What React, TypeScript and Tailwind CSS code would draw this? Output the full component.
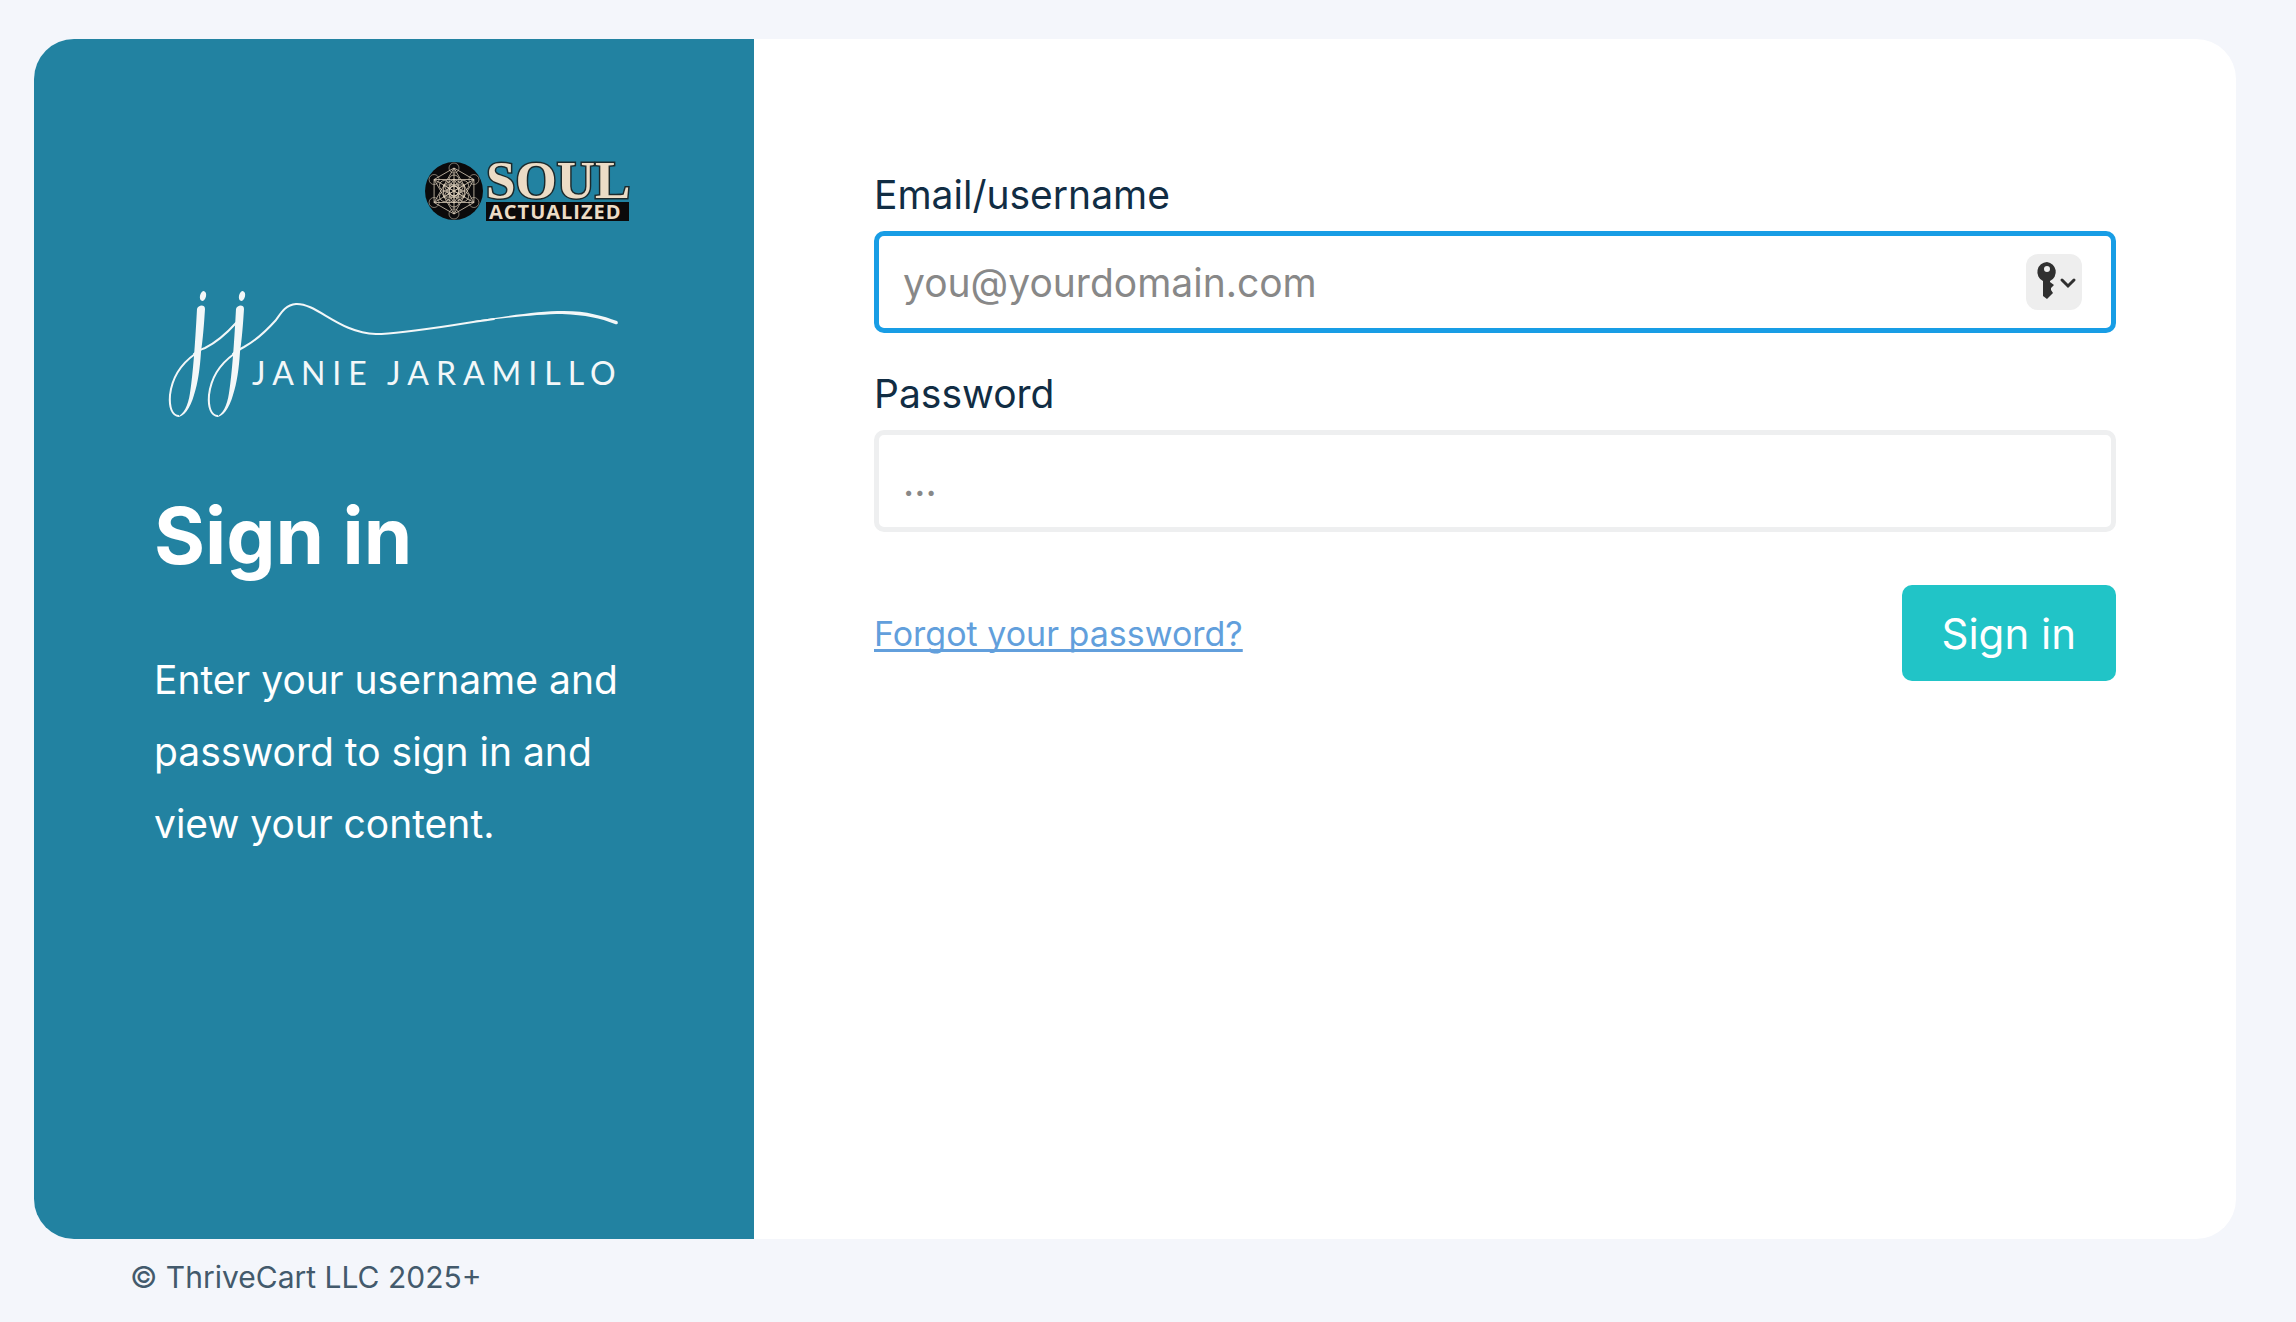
import { useState } from "react";
import type { InputHTMLAttributes, ReactNode } from "react";

const spokes = [0, 60, 120, 180, 240, 300].map((deg) => {
  const a = ((deg - 90) * Math.PI) / 180;
  return { x: Math.cos(a), y: Math.sin(a) };
});

function SoulLogo() {
  return (
    <svg width="224" height="80" viewBox="0 0 224 80" role="img" aria-label="Soul Actualized" className="self-end">
      <circle cx="44" cy="41" r="29" fill="#0b0a0b" />
      <g transform="translate(44 41)" fill="none" stroke="#d9cbb8" strokeWidth="0.8">
        {spokes.map((p, i) => (
          <g key={i}>
            <circle cx={p.x * 23} cy={p.y * 23} r="5" strokeOpacity="0.7" />
            <circle cx={p.x * 11} cy={p.y * 11} r="5" />
            {spokes.slice(i + 1).map((q, j) => (
              <g key={j}>
                <line x1={p.x * 23} y1={p.y * 23} x2={q.x * 23} y2={q.y * 23} />
                <line x1={p.x * 12} y1={p.y * 12} x2={q.x * 12} y2={q.y * 12} />
              </g>
            ))}
          </g>
        ))}
        <circle r="5" strokeWidth="1.5" />
      </g>
      <rect x="76" y="52" width="143" height="19" fill="#0b0a0b" />
      <text fill="#ecdcc6" className="font-bold">
        <tspan x="76" y="48" fontSize="53" stroke="#1c2a2c" strokeWidth="3" paintOrder="stroke" className="font-['Liberation_Serif',serif]">
          SOUL
        </tspan>
        <tspan x="79" y="69" fontSize="20" letterSpacing="1" className="font-['Open_Sans',sans-serif]">
          ACTUALIZED
        </tspan>
      </text>
    </svg>
  );
}

function JanieLogo() {
  return (
    <svg width="480" height="150" viewBox="0 0 480 150" role="img" aria-label="Janie Jaramillo" fill="#f3f7f8">
      <g id="letter-j">
        <ellipse cx="49" cy="16" rx="3" ry="5" transform="rotate(14 49 16)" />
        <path d="M43 29C44 25 51 24 51 29C50 45 49 58 47 72C46 88 44 103 40 115C36 129 30 137 23 137C30 134 34 126 36 113C39 94 41 66 43 29Z" />
        <path d="M25 136C18 136 15 127 16 115C18 98 27 84 41 74" fill="none" stroke="#f3f7f8" strokeWidth="2" />
      </g>
      <use href="#letter-j" x="39" />
      <g fill="none" stroke="#f3f7f8" strokeWidth="2" strokeLinecap="round">
        <path d="M40 74C44 70 46 70 51 68C63 62 73 53 82 43" />
        <path d="M79 74C82 71 86 69 90 67C103 60 113 50 122 40C127 33 131 25 142 24C163 23 185 53 222 54C250 54 290 46 340 39" />
      </g>
      <path d="M320 41C360 35 385 31 410 31C433 31 449 36 463 41C465 43 463 45 461 44C446 38 432 35 408 34C385 34 350 38 320 42Z" />
      <g fontSize="32" letterSpacing="7" className="font-['Lato',sans-serif]">
        <text x="98" y="105">JANIE</text>
        <text x="233" y="105">JARAMILLO</text>
      </g>
    </svg>
  );
}

function KeyIcon() {
  return (
    <svg width="56" height="56" viewBox="-1 0 56 56" aria-hidden="true">
      <path
        fillRule="evenodd"
        fill="#303030"
        d="M20 8A10 10 0 0 1 23 27V28L27 31L24 34V36L26 39L24 41L20 45L16 42V27A10 10 0 0 1 20 8ZM20 12A3 3 0 1 0 20 18A3 3 0 1 0 20 12Z"
      />
      <path d="M35 26L41 32L47 26" fill="none" stroke="#303030" strokeWidth="3" strokeLinecap="round" />
    </svg>
  );
}

interface FieldProps extends InputHTMLAttributes<HTMLInputElement> {
  id: string;
  label: string;
  active?: boolean;
  children?: ReactNode;
}

function Field({ id, label, active, children, ...rest }: FieldProps) {
  return (
    <div>
      <label htmlFor={id} className="block text-[39px] leading-[48px] text-[#112d44]">
        {label}
      </label>
      <div className="relative mt-3">
        <input
          id={id}
          {...rest}
          className={`block h-[102px] w-full rounded-[10px] border-[5px] bg-white px-6 text-[39px] text-[#112d44] outline-none placeholder:text-[#888888] ${active ? "border-[#189de5]" : "border-[#eeeff0]"}`}
        />
        {children}
      </div>
    </div>
  );
}

export default function App() {
  const [email, setEmail] = useState("");
  const [pass, setPass] = useState("");

  return (
    <div className="flex min-h-screen flex-col bg-[#f4f6fb] pt-[39px] pr-[60px] pl-[34px] font-['Inter',sans-serif]">
      <main className="flex flex-1 overflow-hidden rounded-[40px] bg-white">
        <section className="flex w-[720px] shrink-0 flex-col bg-[#2282a1] px-[120px] pt-[111px] text-white">
          <SoulLogo />
          <div className="mt-[50px]">
            <JanieLogo />
          </div>
          <h1 className="mt-[58px] text-[78px] leading-[96px] font-bold">Sign in</h1>
          <p className="mt-[60px] text-[39px] leading-[72px]">Enter your username and password to sign in and view your content.</p>
        </section>

        <form className="flex-1 px-[120px] pt-[132px]" onSubmit={(e) => e.preventDefault()}>
          <Field id="email" label="Email/username" placeholder="you@yourdomain.com" value={email} onChange={(e) => setEmail(e.target.value)} active>
            <button type="button" aria-label="Choose a saved login" className="absolute top-[23px] right-[34px] rounded-xl bg-[#eeeeee]">
              <KeyIcon />
            </button>
          </Field>
          <div className="mt-[37px]">
            <Field id="password" label="Password" type="password" placeholder="..." value={pass} onChange={(e) => setPass(e.target.value)} />
          </div>
          <div className="mt-[53px] flex items-center justify-between">
            <a href="#forgot" className="text-[34px] text-[#629fdc] underline decoration-[3px] underline-offset-[3px] [text-decoration-skip-ink:none]">
              Forgot your password?
            </a>
            <button type="submit" className="h-24 rounded-[10px] bg-[#21c4c7] px-10 text-[42px] text-white">
              Sign in
            </button>
          </div>
        </form>
      </main>
      <footer className="h-[83px] px-24 pt-4 text-[30px] leading-[44px] text-[#435a6c]">© ThriveCart LLC 2025+</footer>
    </div>
  );
}
